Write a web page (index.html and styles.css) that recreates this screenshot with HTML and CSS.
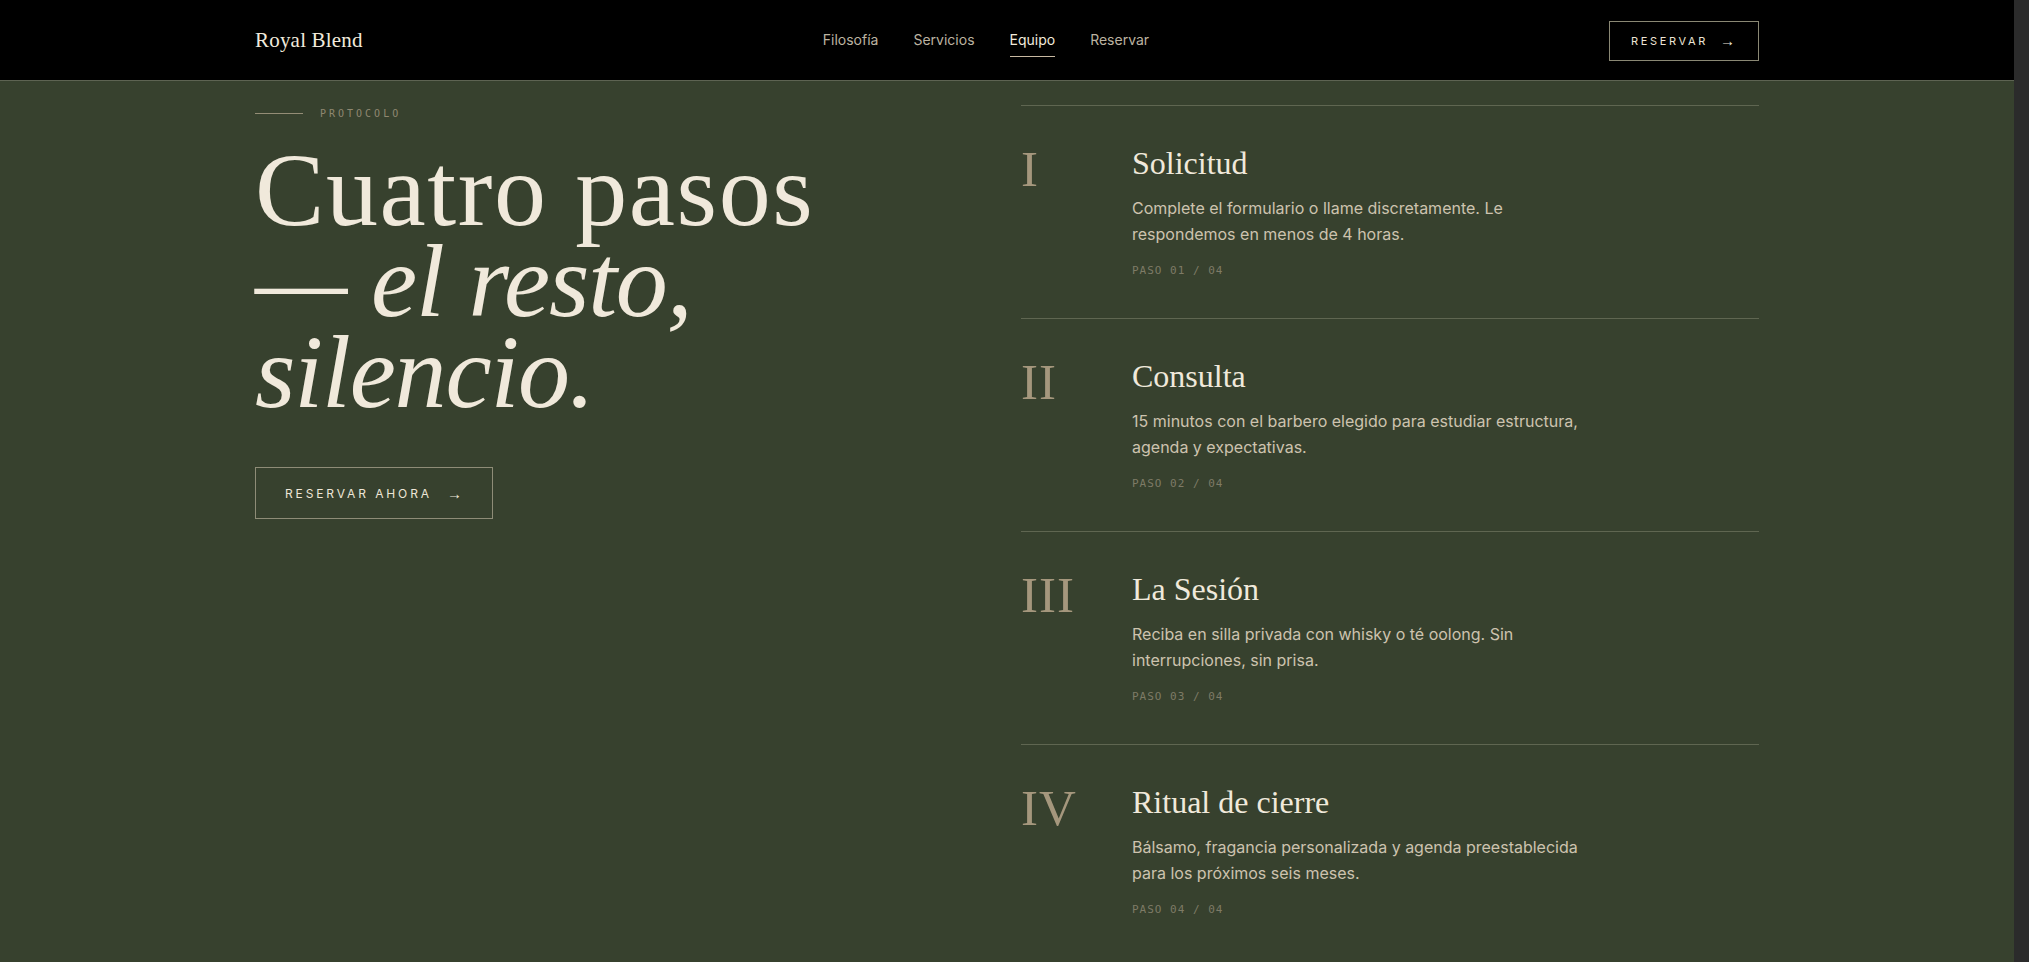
FILE: index.html
```html
<!DOCTYPE html>
<html lang="es">
<head>
    <meta charset="UTF-8" />
    <meta name="viewport" content="width=device-width, initial-scale=1.0" />
    <title>Royal Blend — Protocolo</title>
    <link rel="stylesheet" href="styles.css">
</head>
<body>
    <header class="topbar">
        <div class="wrap topbar-inner">
            <a class="logo" href="#">Royal Blend</a>
            <nav class="nav">
                <a href="#">Filosofía</a>
                <a href="#">Servicios</a>
                <a href="#" class="active">Equipo</a>
                <a href="#">Reservar</a>
            </nav>
            <a class="btn btn-small" href="#">Reservar <span class="arrow">&rarr;</span></a>
        </div>
    </header>

    <section class="protocol">
        <div class="wrap protocol-grid">
            <div class="intro">
                <div class="eyebrow"><span class="eyebrow-line"></span>Protocolo</div>
                <h2>Cuatro pasos<br><em>— el resto,<br>silencio.</em></h2>
                <a class="btn btn-large" href="#">Reservar ahora <span class="arrow">&rarr;</span></a>
            </div>

            <ol class="steps">
                <li class="step">
                    <span class="numeral">I</span>
                    <div class="step-body">
                        <h3>Solicitud</h3>
                        <p>Complete el formulario o llame discretamente. Le respondemos en menos de 4 horas.</p>
                        <span class="step-count">Paso 01 / 04</span>
                    </div>
                </li>
                <li class="step">
                    <span class="numeral">II</span>
                    <div class="step-body">
                        <h3>Consulta</h3>
                        <p>15 minutos con el barbero elegido para estudiar estructura, agenda y expectativas.</p>
                        <span class="step-count">Paso 02 / 04</span>
                    </div>
                </li>
                <li class="step">
                    <span class="numeral">III</span>
                    <div class="step-body">
                        <h3>La Sesión</h3>
                        <p>Reciba en silla privada con whisky o té oolong. Sin interrupciones, sin prisa.</p>
                        <span class="step-count">Paso 03 / 04</span>
                    </div>
                </li>
                <li class="step">
                    <span class="numeral">IV</span>
                    <div class="step-body">
                        <h3>Ritual de cierre</h3>
                        <p>Bálsamo, fragancia personalizada y agenda preestablecida para los próximos seis meses.</p>
                        <span class="step-count">Paso 04 / 04</span>
                    </div>
                </li>
            </ol>
        </div>
    </section>
</body>
</html>
```

FILE: styles.css
```css
/* dark gutter on the right, like a scrollbar track */
html {
    background-color: #2b2b2b;
}

body {
    margin: 0 15px 0 0;
    padding: 0;
    min-height: 100vh;
    background-color: #37412e;
    color: #efe8da;
    font-family: Inter, "Noto Sans", sans-serif;
}

a {
    color: inherit;
    text-decoration: none;
}

.wrap {
    width: 1504px;
    margin: 0 auto;
}

/* top bar */

.topbar {
    position: sticky;
    top: 0;
    z-index: 10;
    background-color: #000;
    border-bottom: 1px solid #5d6352;
}

.topbar-inner {
    height: 80px;
    display: flex;
    justify-content: space-between;
    align-items: center;
}

.logo {
    font-family: "Liberation Serif", serif;
    font-size: 21px;
    color: #f1eadc;
    letter-spacing: 0.2px;
}

.nav {
    display: flex;
    gap: 35px;
    font-size: 14px;
}

.nav a {
    color: #bcb3a1;
    padding: 8px 0;
    border-bottom: 1px solid transparent;
}

.nav a.active {
    color: #f1eadc;
    border-bottom-color: #c8b9a2;
}

.btn {
    display: inline-flex;
    align-items: center;
    box-sizing: border-box;
    border: 1px solid #8a8874;
    color: #ede5d6;
    text-transform: uppercase;
    letter-spacing: 0.24em;
}

.btn .arrow {
    letter-spacing: 0;
    font-family: "Liberation Sans", sans-serif;
    font-size: 15px;
}

.btn-small {
    height: 40px;
    padding: 0 23px 0 21px;
    font-size: 11px;
    gap: 12px;
    margin-top: 1px;
}

.btn-large {
    height: 52px;
    padding: 0 30px 0 29px;
    font-size: 12px;
    gap: 15px;
    margin-top: 50px;
    border-color: #8e8c77;
}

/* protocol section */

.protocol {
    padding: 24px 0 80px;
}

.protocol-grid {
    display: grid;
    grid-template-columns: minmax(0, 1fr) 738px;
}

.eyebrow {
    display: flex;
    align-items: center;
    gap: 17px;
    height: 16px;
    font-family: "DejaVu Sans Mono", monospace;
    font-size: 10px;
    letter-spacing: 3px;
    text-transform: uppercase;
    color: #8f8871;
}

.eyebrow-line {
    width: 48px;
    height: 1px;
    background-color: #948d76;
}

.intro h2 {
    margin: 23px 0 0;
    font-family: "Liberation Serif", serif;
    font-weight: normal;
    font-size: 104px;
    line-height: 91px;
    letter-spacing: 1.6px;
    color: #f0e9db;
}

.intro h2 em {
    font-style: italic;
    letter-spacing: -1.2px;
}

.steps {
    list-style: none;
    margin: 0;
    padding: 0;
}

.step {
    display: grid;
    grid-template-columns: 111px minmax(0, 1fr);
    align-items: start;
    padding: 38px 0 39px;
    border-top: 1px solid #5f6651;
}

.numeral {
    font-family: "Liberation Serif", serif;
    font-size: 51px;
    line-height: 1;
    letter-spacing: 1px;
    color: #a5977d;
}

.step h3 {
    margin: 0;
    font-family: "Liberation Serif", serif;
    font-weight: normal;
    font-size: 32px;
    line-height: 38px;
    color: #f0e9db;
}

.step p {
    margin: 13px 0 0;
    max-width: 460px;
    font-size: 16px;
    line-height: 26px;
    color: #cdc3af;
}

.step-count {
    display: block;
    margin-top: 16px;
    font-family: "DejaVu Sans Mono", monospace;
    font-size: 11px;
    line-height: 16px;
    letter-spacing: 1px;
    text-transform: uppercase;
    color: #7e7b66;
}
```
